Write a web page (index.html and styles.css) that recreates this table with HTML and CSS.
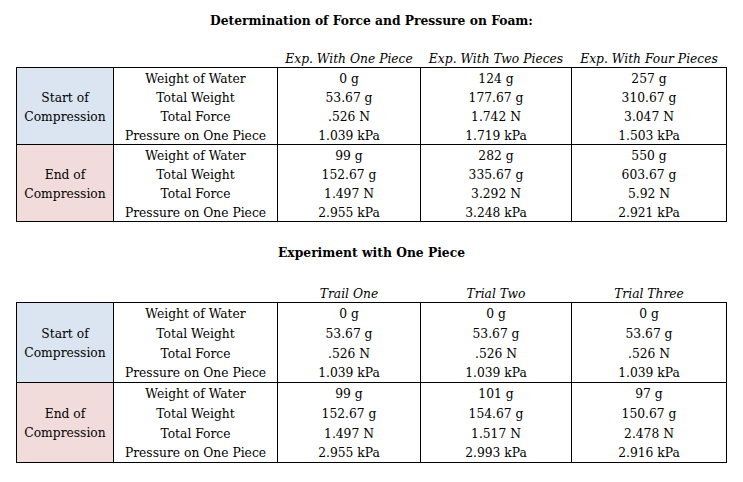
FILE: index.html
```html
<!DOCTYPE html>
<html lang="en">
<head>
<meta charset="utf-8">
<title>Determination of Force and Pressure on Foam</title>
<link rel="stylesheet" href="styles.css">
</head>
<body>
<main class="page">
  <h1 class="title title-first">Determination of Force and Pressure on Foam:</h1>
  <table class="data data-short">
    <colgroup>
      <col class="c-label"><col class="c-param"><col class="c-v1"><col class="c-v2"><col class="c-v3">
    </colgroup>
    <thead>
      <tr><th></th><th></th><th>Exp. With One Piece</th><th>Exp. With Two Pieces</th><th>Exp. With Four Pieces</th></tr>
    </thead>
    <tbody>
      <tr><td class="label start" rowspan="4">Start of<br>Compression</td><td>Weight of Water</td><td>0 g</td><td>124 g</td><td>257 g</td></tr>
      <tr><td>Total Weight</td><td>53.67 g</td><td>177.67 g</td><td>310.67 g</td></tr>
      <tr><td>Total Force</td><td>.526 N</td><td>1.742 N</td><td>3.047 N</td></tr>
      <tr><td>Pressure on One Piece</td><td>1.039 kPa</td><td>1.719 kPa</td><td>1.503 kPa</td></tr>
    </tbody>
    <tbody>
      <tr><td class="label end" rowspan="4">End of<br>Compression</td><td>Weight of Water</td><td>99 g</td><td>282 g</td><td>550 g</td></tr>
      <tr><td>Total Weight</td><td>152.67 g</td><td>335.67 g</td><td>603.67 g</td></tr>
      <tr><td>Total Force</td><td>1.497 N</td><td>3.292 N</td><td>5.92 N</td></tr>
      <tr><td>Pressure on One Piece</td><td>2.955 kPa</td><td>3.248 kPa</td><td>2.921 kPa</td></tr>
    </tbody>
  </table>

  <h1 class="title title-second">Experiment with One Piece</h1>
  <table class="data data-tall">
    <colgroup>
      <col class="c-label"><col class="c-param"><col class="c-v1"><col class="c-v2"><col class="c-v3">
    </colgroup>
    <thead>
      <tr><th></th><th></th><th>Trail One</th><th>Trial Two</th><th>Trial Three</th></tr>
    </thead>
    <tbody>
      <tr><td class="label start" rowspan="4">Start of<br>Compression</td><td>Weight of Water</td><td>0 g</td><td>0 g</td><td>0 g</td></tr>
      <tr><td>Total Weight</td><td>53.67 g</td><td>53.67 g</td><td>53.67 g</td></tr>
      <tr><td>Total Force</td><td>.526 N</td><td>.526 N</td><td>.526 N</td></tr>
      <tr><td>Pressure on One Piece</td><td>1.039 kPa</td><td>1.039 kPa</td><td>1.039 kPa</td></tr>
    </tbody>
    <tbody>
      <tr><td class="label end" rowspan="4">End of<br>Compression</td><td>Weight of Water</td><td>99 g</td><td>101 g</td><td>97 g</td></tr>
      <tr><td>Total Weight</td><td>152.67 g</td><td>154.67 g</td><td>150.67 g</td></tr>
      <tr><td>Total Force</td><td>1.497 N</td><td>1.517 N</td><td>2.478 N</td></tr>
      <tr><td>Pressure on One Piece</td><td>2.955 kPa</td><td>2.993 kPa</td><td>2.916 kPa</td></tr>
    </tbody>
  </table>
</main>
</body>
</html>
```

FILE: styles.css
```css
html, body {
  margin: 0;
  padding: 0;
  background: #ffffff;
}

body {
  font-family: "DejaVu Serif", "Liberation Serif", serif;
  font-size: 12.3px;
  color: #000000;
}

.page {
  display: flex;
  flex-direction: column;
  width: 711px;
  padding: 11px 0 0 16px;
}

.title {
  margin: 0;
  font-size: 12.3px;
  font-weight: bold;
  line-height: 20px;
  text-align: center;
}

.title-first {
  margin-bottom: 17px;
}

.title-second {
  margin-top: 21px;
  margin-bottom: 20px;
}

.data {
  border-collapse: collapse;
  table-layout: fixed;
  width: 711px;
}

.c-label { width: 97px; }
.c-param { width: 164px; }
.c-v1 { width: 143px; }
.c-v2 { width: 151px; }
.c-v3 { width: 155px; }

.data th {
  box-sizing: border-box;
  font-weight: normal;
  font-style: italic;
  padding: 3px 0 0;
  height: 19px;
  line-height: 16px;
  text-align: center;
  vertical-align: top;
  border: none;
}

.data-short th {
  padding-top: 4px;
  line-height: 15px;
}

.data tbody {
  border: 1px solid #000000;
}

.data td {
  box-sizing: border-box;
  padding: 2px 0 0;
  height: 19px;
  line-height: 17px;
  text-align: center;
  vertical-align: middle;
  border-left: 1px solid #000000;
  border-right: 1px solid #000000;
  white-space: nowrap;
}

.data-short td {
  padding-top: 3px;
  line-height: 16px;
}

.data-tall td {
  height: 19.75px;
  padding-top: 3px;
  line-height: 16.75px;
}

.data .label {
  line-height: 19px;
  padding-top: 2px;
}

.data-short .label {
  padding-top: 3px;
}

.label.start {
  background: #dbe5f1;
}

.label.end {
  background: #f2dcdb;
}
```
